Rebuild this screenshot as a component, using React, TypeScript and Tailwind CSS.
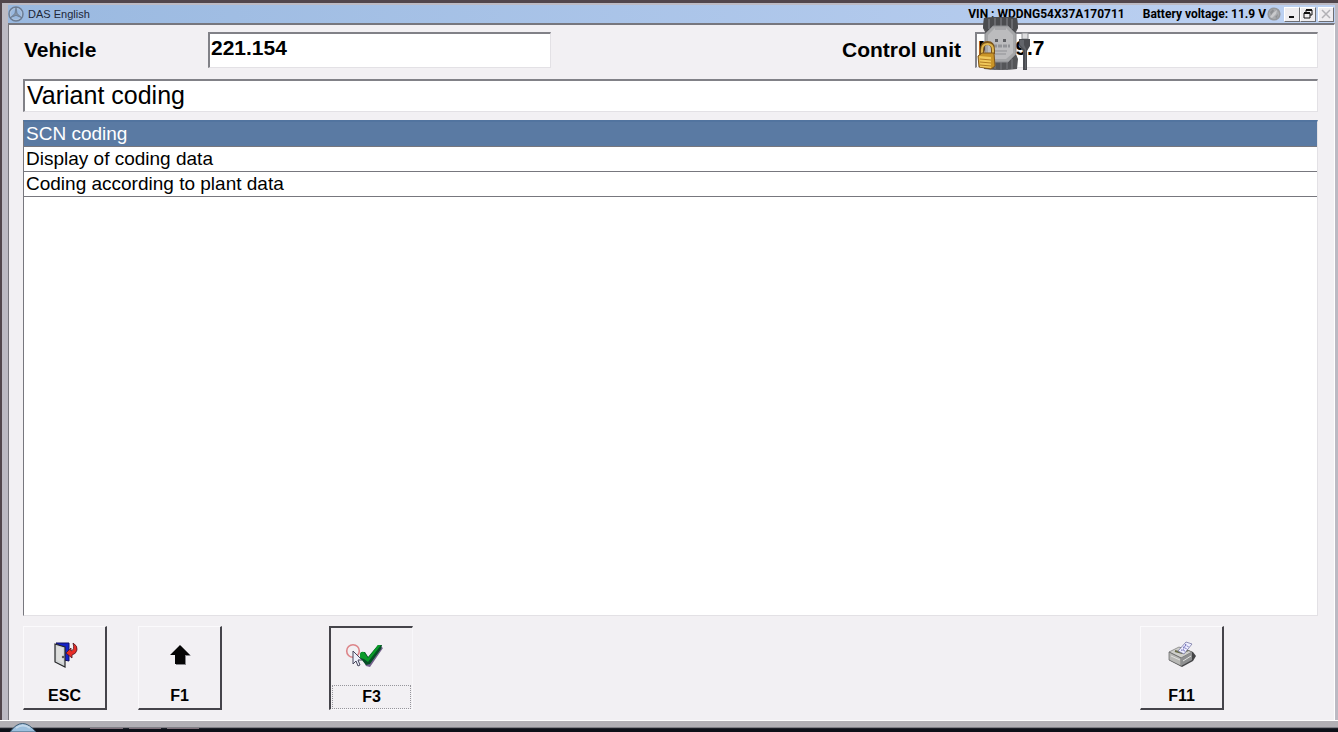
import { useState, type ReactNode } from "react";

const OPTIONS = ["SCN coding", "Display of coding data", "Coding according to plant data"];

function StarLogo() {
  return (
    <svg className="h-4 w-4 shrink-0" viewBox="0 0 16 16" fill="none" aria-hidden="true">
      <circle cx="8" cy="8" r="7" stroke="#6d7c92" strokeWidth="1.5" />
      <circle cx="8" cy="8" r="5.6" stroke="#b4c4d8" strokeWidth="0.8" />
      <path d="M8 1.5 9.1 7.5 13.4 11.6 8 9.4 2.6 11.6 6.9 7.5Z" fill="#8493a8" stroke="#5d6b80" strokeWidth="0.6" />
    </svg>
  );
}

function StatusOrb() {
  return (
    <svg className="mr-[3px] ml-px h-4 w-3.5 shrink-0" viewBox="0 0 14 16" aria-hidden="true">
      <circle cx="7" cy="8" r="6.6" fill="#96989c" />
      <circle cx="7" cy="8" r="5" fill="#a9abaf" />
      <path d="M3 11 6 7 10 4 9 8 5 12Z" fill="#c9cacd" />
      <path d="M3 6 6 3 7 5 4 9ZM8 11 11 8 10 12Z" fill="#8d8f93" />
    </svg>
  );
}

function DeviceOverlay() {
  return (
    <svg className="pointer-events-none absolute top-[13px] right-[304px] h-[55px] w-[54px]" viewBox="0 0 54 55" aria-hidden="true">
      <path d="M7 2Q24 0 40 2L41 12 38 18 39 38 41 43 40 53Q24 55 7 53L6 43 8 38 9 18 6 12Z" fill="#555659" />
      <path d="M7 2Q24 0 40 2L41 12 36 16H11L6 12Z" fill="#4b4c4f" />
      <path d="M12 3V13M18 2V12M24 2V11M30 2V12M35 3V13M12 43V53M18 45V54M24 45V54M30 45V54M35 43V53" stroke="#68696d" strokeWidth="2" />
      <path d="M16 10H31L39 18V38L31 46H16L8 38V18Z" fill="#a5a6a8" stroke="#8b8c90" />
      <path d="M18 12H29L36 19V37L29 43H18L11 37V19Z" fill="#bcbcbe" />
      <path d="M18 13H29M17 35H30M18 38H29" stroke="#909195" strokeWidth="1" />
      <path d="M18 23H21V26H18ZM26 23H29V26H26Z" fill="#5e5f63" />
      <path d="M16 30H33" stroke="#929397" strokeWidth="3" strokeDasharray="4 1" />
      <path d="M5 38V34Q5 27 10.500 27Q16 27 16 34V38" fill="none" stroke="#795319" strokeWidth="4" />
      <path d="M5 38V34Q5 28 10.500 28Q16 28 16 34V38" fill="none" stroke="#deb64f" strokeWidth="2" />
      <path d="M1 40 5 37H17L18 50 14 53 2 51Z" fill="#c99427" stroke="#80561b" />
      <path d="M2 40 14 41V52L3 51Z" fill="#f0c85b" />
      <path d="M3 43 14 44M3 46 14 47M3 49 14 50" stroke="#b27c22" />
      <path d="M45 17H51V23H45Z" fill="#dedee0" stroke="#8d8e92" />
      <path d="M42 23H53V30L50 35V54H46V35L42 30Z" fill="#4a4c51" />
      <path d="M43 24H47V29L49 33V53H48V34L43 29Z" fill="#62656b" />
    </svg>
  );
}

function ExitIcon() {
  return (
    <svg className="h-7 w-7" viewBox="0 0 28 28" aria-hidden="true">
      <path d="M5 2H18V20L13 19V8Z" fill="#1522c9" stroke="#101063" />
      <path d="M4 3 14 6V26L4 21Z" fill="#d0d3d5" stroke="#252527" strokeWidth="1.2" />
      <path d="M5.500 5 12 7V22L5.500 19Z" fill="#dededc" />
      <circle cx="12" cy="16" r="1.200" fill="#555" />
      <path d="M22 2Q27 5 26 9Q25 13 21 14V17L15 12 20 7V10Q24 9 22 2Z" fill="#e82d27" stroke="#4b1720" strokeWidth="0.8" />
    </svg>
  );
}

function UpIcon() {
  return (
    <svg className="h-7 w-7" viewBox="0 0 28 28" aria-hidden="true">
      <path d="M15 5 25 15H20V24H10V15" fill="#85858a" />
      <path d="M14 4 24 14H19V23H9V14H4Z" fill="#050505" />
    </svg>
  );
}

function ConfirmIcon() {
  return (
    <svg className="mr-4 h-7 w-10" viewBox="0 0 40 28" aria-hidden="true">
      <path d="M17 14 22 12 25 16 36 4 39 6 26 25 22 24Z" fill="#74618c" />
      <path d="M16 13 17 10 21 10 24 15 34 3 38 3 37 7 26 22 22 23 17 17Z" fill="#064e25" />
      <path d="M16 12Q17 9 20 10L24 16 34 3 37 3 24 20 20 17 16 16Z" fill="#0b9a29" />
      <circle cx="9" cy="9" r="6.300" fill="none" stroke="#dd8589" strokeWidth="1.600" />
      <path d="M9 9V22L12 19L14 24L16 23L14 18H18Z" fill="#eef0fa" stroke="#44445b" />
    </svg>
  );
}

function PrinterIcon() {
  return (
    <svg className="h-7 w-8" viewBox="0 0 32 28" aria-hidden="true">
      <path d="M3 12 15 6 27 11 30 15 27 20 16 26 3 19Z" fill="#454547" />
      <path d="M3 11 13 6 26 11 15 17Z" fill="#cfcfcb" stroke="#777" strokeWidth="0.7" />
      <path d="M3 11 15 17V25L3 19Z" fill="#b8b8b5" stroke="#5f5f5f" strokeWidth="0.7" />
      <path d="M15 17 26 11V19L15 25Z" fill="#8e8f90" />
      <path d="M5 15 14 19M17 20 25 15" stroke="#e2e2df" />
      <path d="M9 10 16 12 22 9" fill="none" stroke="#696c4a" strokeWidth="2" />
      <path d="M12 10 20 1 26 3 18 13Z" fill="#efefff" stroke="#7778a5" strokeWidth="0.8" />
      <path d="M19 4 23 6M17 6 21 8M15 9 19 10M20 3 17 9" stroke="#6765b3" strokeDasharray="1.500 1" />
    </svg>
  );
}

function WindowButton({ label, children, disabled = false }: { label: string; children: ReactNode; disabled?: boolean }) {
  return (
    <button type="button" aria-label={label} disabled={disabled} className="flex h-[15px] w-4 items-center justify-center border border-t-white border-r-[#6c6d72] border-b-[#6c6d72] border-l-white bg-[#efedf0]">
      <svg className="h-3 w-3" viewBox="0 0 12 12" fill="none" aria-hidden="true">{children}</svg>
    </button>
  );
}

function Field({ id, label, value, labelClass }: { id: string; label: string; value: string; labelClass: string }) {
  return (
    <div className="flex items-center">
      <label htmlFor={id} className={labelClass}>{label}</label>
      <input id={id} readOnly value={value} className="h-9 w-[343px] border border-t-2 border-t-[#818187] border-r-[#e3e1e5] border-b-[#e3e1e5] border-l-2 border-l-[#818187] bg-white pb-1.5 pl-px outline-none" />
    </div>
  );
}

function FunctionKey({ label, children, pressed = false }: { label: string; children: ReactNode; pressed?: boolean }) {
  const frame = pressed
    ? "border-t-2 border-l-2 border-t-[#45444a] border-l-[#45444a] border-r-[#f8f7fa] border-b-[#f8f7fa] pt-3.5"
    : "border-r-2 border-b-2 border-t-[#fbfafc] border-l-[#fbfafc] border-r-[#45444a] border-b-[#45444a] pt-3.5";
  return (
    <button type="button" className={`flex h-[84px] w-[84px] flex-col items-center justify-between border ${frame}`}>
      {children}
      <span className={pressed ? "w-[79px] border border-dotted border-[#96959b] text-center leading-[22px]" : "w-full text-center leading-6"}>{label}</span>
    </button>
  );
}

export default function App() {
  const [selected, setSelected] = useState(0);
  return (
    <div className="flex min-h-screen flex-col border-t-[3px] border-l-2 border-[#51464c] bg-[#bcbac3] font-['Liberation_Sans',Arial,sans-serif] text-black">
      <div className="relative mr-[3px] ml-1.5 flex grow flex-col pt-0.5">
        <header className="flex h-[18px] items-center justify-between bg-linear-to-r from-[#9ab9e0] to-[#bdd1f2]">
          <div className="flex items-center gap-1 text-[11px] text-[#202738]">
            <StarLogo />
            <h1>DAS English</h1>
          </div>
          <div className="flex items-center text-xs font-bold">
            <span className="mr-[18px] font-['Roboto',sans-serif]">VIN : WDDNG54X37A170711</span>
            <span className="font-['Roboto',sans-serif]">Battery voltage: 11.9 V</span>
            <StatusOrb />
            <div className="flex">
              <WindowButton label="Minimize"><path d="M3 9H8" stroke="#111" strokeWidth="2" /></WindowButton>
              <WindowButton label="Restore"><path d="M4 5V2H10V7H8M2 5H8V10H2Z" stroke="#111" /><path d="M4 2H10M2 5H8" stroke="#111" strokeWidth="2" /></WindowButton>
              <span className="mr-px ml-0.5 flex"><WindowButton label="Close" disabled><path d="m2 2 8 8m0-8-8 8" stroke="#b2b1b6" strokeWidth="1.500" /></WindowButton></span>
            </div>
          </div>
        </header>
        <main className="flex grow flex-col border-t-2 border-r border-l border-t-[#77777e] border-r-white border-l-[#77777e] bg-[#f2f0f3] pt-[7px] pr-4 pb-2.5 pl-3.5">
          <div className="flex justify-between text-[21px] font-bold">
            <Field id="vehicle" label="Vehicle" value="221.154" labelClass="w-[185px] pl-px" />
            <Field id="control-unit" label="Control unit" value="ME 9.7" labelClass="pr-3.5" />
          </div>
          <h2 className="mt-[11px] h-[33px] border border-t-2 border-t-[#818187] border-r-[#e3e1e5] border-b-[#e3e1e5] border-l-2 border-l-[#818187] bg-white pl-0.5 text-[25px] leading-[29px]">Variant coding</h2>
          <ul className="mt-2 grow border border-t-2 border-t-[#52749f] border-r-[#e3e1e5] border-b-[#e3e1e5] border-l-[#77777e] bg-white text-[19px]">
            {OPTIONS.map((option, index) => (
              <li key={option} className="border-b border-[#77777e]">
                <button
                  type="button"
                  aria-pressed={selected === index}
                  onClick={() => setSelected(index)}
                  className={`block h-6 w-full pl-0.5 text-left leading-6 ${selected === index ? "bg-[#5a7aa3] text-white" : ""}`}
                >
                  {option}
                </button>
              </li>
            ))}
          </ul>
          <div className="mt-2.5 flex pr-[94px] text-base font-bold">
            <FunctionKey label="ESC"><ExitIcon /></FunctionKey>
            <div className="ml-[31px]"><FunctionKey label="F1"><UpIcon /></FunctionKey></div>
            <div className="ml-[107px]"><FunctionKey label="F3" pressed><ConfirmIcon /></FunctionKey></div>
            <div className="ml-auto"><FunctionKey label="F11"><PrinterIcon /></FunctionKey></div>
          </div>
        </main>
        <DeviceOverlay />
      </div>
      <footer className="-ml-0.5 flex h-3 items-end border-t border-white bg-linear-to-b from-[#b2b0b5] from-55% to-[#0d1018] to-70%">
        <svg className="ml-2 h-2.5 w-40" viewBox="0 0 160 10" aria-hidden="true">
          <path d="M2 10Q14-7 28 10Z" fill="#9dc0de" stroke="#3d5b73" />
          <path d="M8 6Q15 1 22 6" fill="none" stroke="#c3d8ea" strokeWidth="2" />
        </svg>
        <svg className="-ml-20 h-1 w-[120px]" viewBox="0 0 120 4" aria-hidden="true">
          <path d="M2 0H35M41 0H73M79 0H111" stroke="#81717b" strokeWidth="2" />
        </svg>
      </footer>
    </div>
  );
}
